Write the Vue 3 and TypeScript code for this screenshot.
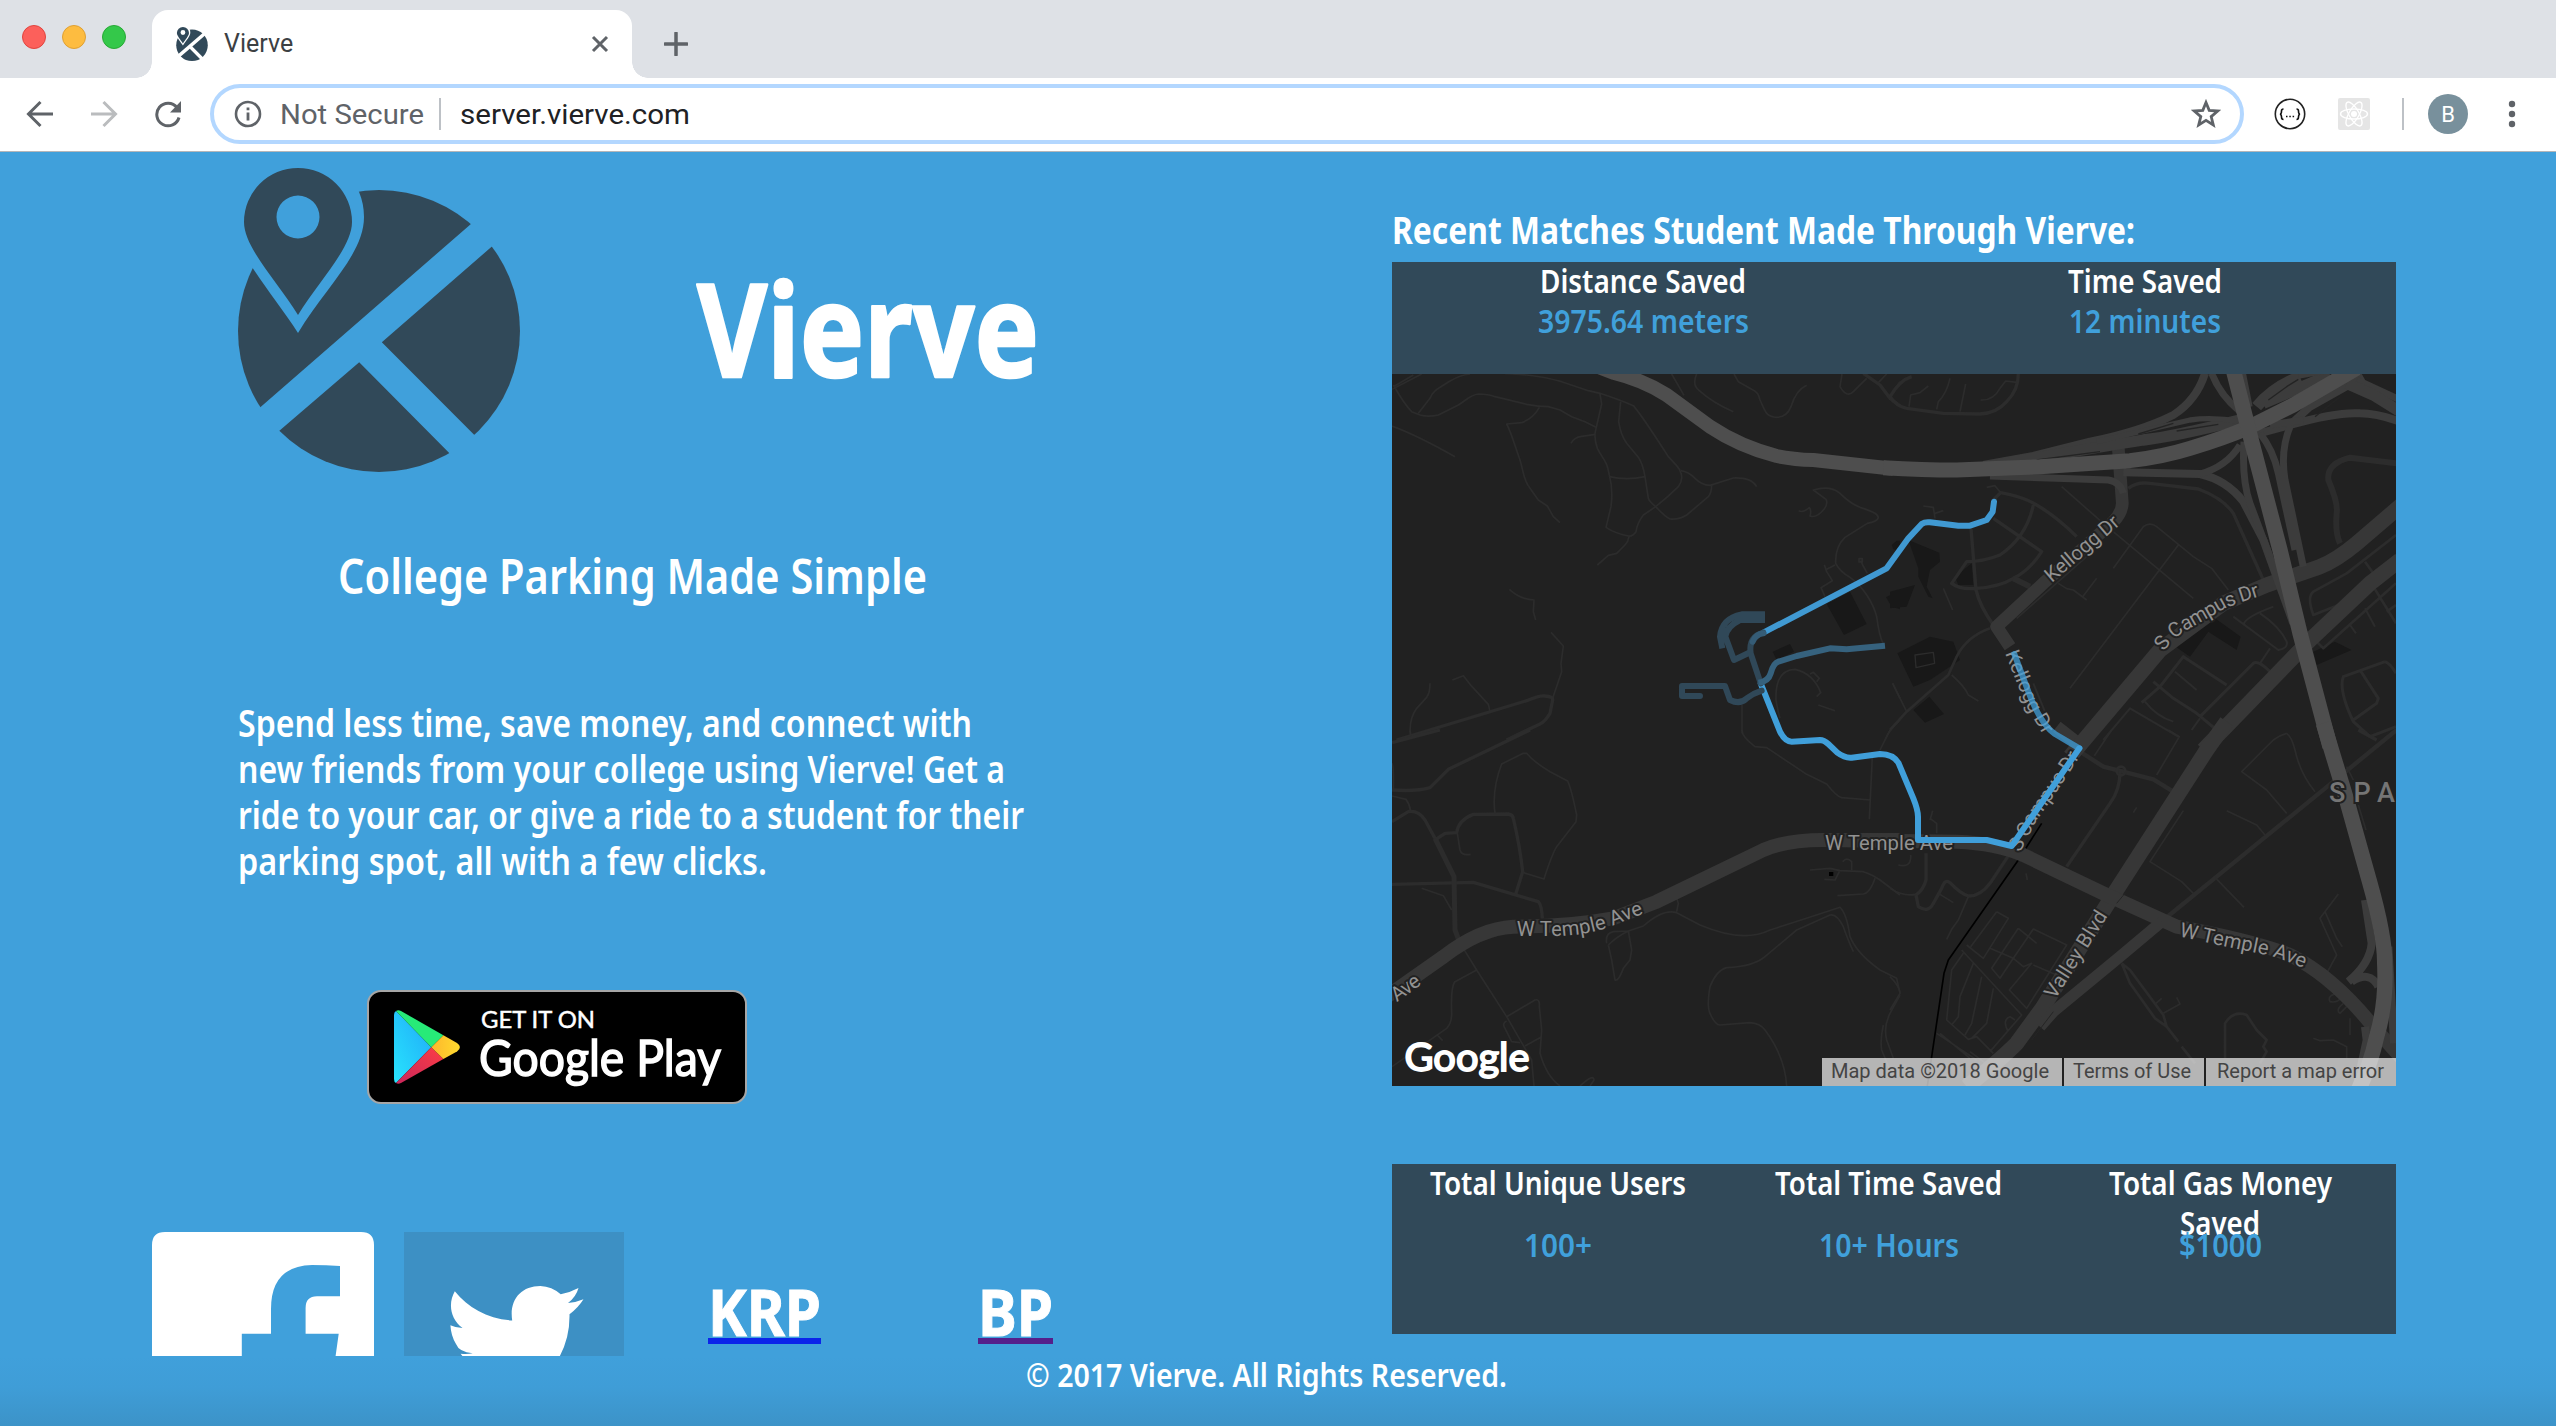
<script setup lang="ts">
import { defineComponent, h } from 'vue'

/* One line of text set to an exact measure. Baseline sits at 0.8 of the size. */
const Fit = defineComponent({
  props: { text: { type: String, required: true }, w: { type: Number, required: true }, size: { type: Number, required: true } },
  setup(props) {
    return () =>
      h('svg', { width: props.w, height: props.size, style: { display: 'block', overflow: 'visible', flex: 'none' } }, [
        h('text', {
          x: 0, y: props.size * 0.8 + 1, 'font-size': props.size, fill: 'currentColor',
          textLength: props.w, lengthAdjust: 'spacingAndGlyphs',
        }, props.text),
      ])
  },
})

interface Road { w: number; c: string; d: string }
interface Quadrant { id: string; at: string; blocks: string; minor: Road[]; major: Road[]; top: Road[] }

const LOCAL = '#2c2c2c'
const ART = '#373737'
const RAMP = '#3c3c3c'
const HWY = '#4e4e4e'

const quads: Quadrant[] = [
  {
    id: 'nw', at: 'translate(1380 370) scale(.333333)',
    blocks: 'M1340 702L1410 665L1460 762L1392 795ZM1178 845L1230 822L1242 845L1190 870ZM1518 682L1560 660V718L1535 710ZM1535 525L1550 512H1560V545L1540 538Z',
    minor: [
      { w: 5, c: LOCAL, d: 'M40 50L100 15M36 58L125 12M40 45C60 80 80 110 95 125L120 135Q145 142 175 135L235 105C260 90 270 75 295 72Q325 72 345 80L440 103Q475 110 505 110L540 120L575 140L615 155L648 172M115 130L150 85C160 60 175 55 210 33Q240 15 270 12' },
      { w: 5, c: LOCAL, d: 'M375 10L440 15Q500 22 545 35L625 62L660 70Q720 90 760 107C780 130 820 190 865 260L890 287Q900 298 903 310Q910 330 895 350C870 375 850 392 827 410L790 435C775 455 770 470 768 485Q758 500 745 498Q705 490 678 472L693 410Q700 360 688 315C680 270 670 270 652 235Q642 205 646 185L665 102L660 72' },
      { w: 5, c: LOCAL, d: 'M478 112Q460 145 425 158L380 162C395 190 405 230 420 270C432 310 430 330 450 355L475 390L502 408L520 440L540 458M573 220Q582 202 605 199L646 193M722 95L716 155Q722 195 740 220L775 262Q788 280 795 320L805 385Q808 395 827 410Q855 440 870 447Q895 450 920 435L985 380Q995 368 995 345M688 320Q740 332 795 320' },
      { w: 5, c: LOCAL, d: 'M903 302Q925 305 945 325Q965 345 990 346L1060 324Q1115 322 1130 350M747 500Q745 515 735 525L710 550L685 556L652 585M36 168Q110 195 225 260M875 12L912 76M950 12Q935 45 958 62Q1000 100 1060 125M1062 12L1075 35L1115 58Q1135 65 1140 90C1155 120 1155 140 1190 142Q1220 142 1233 110C1245 70 1260 55 1280 46M1386 12L1380 50Q1400 85 1420 65L1460 25M1495 38L1520 12M1530 80L1560 35' },
      { w: 5, c: LOCAL, d: 'M1256 422Q1268 430 1288 413Q1295 420 1290 438Q1310 445 1332 418Q1345 400 1338 388L1300 360Q1350 345 1380 370Q1410 400 1440 412Q1500 430 1494 445Q1490 455 1462 460L1395 502Q1365 530 1367 580Q1380 605 1410 622C1450 650 1480 700 1490 740Q1498 800 1510 822M1333 584L1340 605L1357 632L1323 653L1335 680M1340 598L1365 585M1442 572L1448 585L1462 610M1437 566h10v10h-10z' },
      { w: 5, c: LOCAL, d: 'M388 658Q420 688 462 690L460 725L467 750M513 787L550 828L543 880L545 905L518 985M150 940Q150 970 140 982L110 1015Q85 1050 92 1100M217 930L250 917L270 943L325 1003L330 1025M1200 1045Q1195 1030 1188 990Q1185 900 1245 898Q1300 910 1322 968L1310 980M1290 912L1300 907L1318 925L1310 935M1315 1005L1365 1022M1086 1005V1090M1515 1110Q1530 1075 1560 1050M1538 940L1560 985' },
      { w: 10, c: LOCAL, d: 'M50 1110L440 992Q480 975 495 978Q520 980 518 990L510 1030Q495 1055 480 1062L380 1110M1450 10L1500 45L1530 85L1560 108' },
    ],
    major: [],
    top: [{ w: 42, c: HWY, d: 'M640 -15L700 8Q790 30 860 75L990 170Q1080 230 1190 258Q1240 268 1300 270L1540 296' }],
  },
  {
    id: 'ne', at: 'translate(1890 370) scale(.333333)',
    blocks: 'M55 510L148 548L150 575L120 600L110 650L128 685L115 680L85 620L85 595ZM0 665L75 645L50 710L0 715ZM22 850L120 800L190 815L210 870L120 930L70 950ZM70 1020L118 980L162 1032L105 1058ZM850 825L975 745L1052 800L1040 840L955 785L900 860ZM1270 845L1335 815L1385 840L1280 885ZM195 620L245 580L250 645L205 645Z',
    minor: [
      { w: 4, c: LOCAL, d: 'M75 855L130 847L134 880L78 893Z' },
      { w: 10, c: LOCAL, d: 'M65 20Q30 30 0 80Q20 110 50 115L160 130L270 132Q320 130 350 95Q385 60 385 12M310 390L332 368Q400 380 440 405Q500 440 560 500M430 405Q410 500 330 555Q280 575 230 575L185 640Q210 660 260 655Q330 650 370 625Q420 600 455 545L310 445M243 475L258 660Q270 710 310 765M715 355Q740 335 780 340L925 357Q1000 385 1030 430L1120 630' },
      { w: 5, c: LOCAL, d: 'M57 110L62 75L90 68L115 48M140 118L145 95Q170 70 180 25M210 125L227 42M272 90Q310 92 330 55L347 33L380 37M290 352L315 347L332 368M100 408L130 412L135 445M135 430L160 422M160 655L188 720M515 350L640 460L910 685M670 595L760 470Q780 455 800 470L910 560L965 595L1015 660M865 525L540 955M380 745L590 560M505 640L530 656L550 660L590 690M578 680L620 625M185 915Q225 950 235 975L265 993M8 940L50 1025' },
      { w: 8, c: LOCAL, d: 'M300 775Q230 800 200 860L175 915L50 1025L0 1080M1518 495L1370 610L1270 665Q1250 680 1270 735L1370 695M1425 575L1450 610M1518 640L1300 835L1270 805M1450 650L1518 760M1490 725L1518 705' },
      { w: 18, c: LOCAL, d: 'M1520 280L1380 263Q1310 280 1315 330Q1345 400 1340 430Q1335 490 1350 520M370 625L420 650' },
      { w: 9, c: LOCAL, d: 'M1485 875Q1500 880 1518 910M1485 875L1360 920Q1345 960 1390 1055L1440 1100L1518 1070M1410 900L1465 985L1460 1000L1390 1050M755 998L810 950L880 860L1010 945M790 935L850 985L920 1030L980 1080M930 1040L1090 880Q1105 870 1140 905' },
      { w: 6, c: LOCAL, d: 'M1425 715L1455 770M1380 765L1398 790M905 1080L930 1045M855 905L920 960M765 995Q800 1040 850 1055M640 1110L720 1015L865 1100M1030 740L1165 840Q1195 835 1190 815Q1170 770 1110 730M1062 760Q1070 740 1150 710M1140 835L1110 880M430 940L475 1050' },
    ],
    major: [
      { w: 38, c: ART, d: 'M685 235L697 400Q695 430 670 455L460 640L320 770L360 830M500 1070L570 1125' },
      { w: 46, c: ART, d: 'M540 1160L810 840L1000 700L1130 645L1290 590Q1340 570 1400 520L1540 400M940 1140L1260 810L1440 640L1530 570' },
      { w: 24, c: RAMP, d: 'M945 10Q920 90 850 135Q750 185 600 215L430 258L280 285M700 307L930 312Q1010 330 1060 395L1120 510L1210 760M1090 195L1200 165Q1340 125 1410 130Q1460 130 1530 155M1200 165L1260 110L1420 20' },
      { w: 21, c: RAMP, d: 'M965 10Q990 75 1050 125M300 318L500 325L655 330Q690 335 700 370M930 312Q1010 290 1050 225M1062 215Q1055 330 1080 400L1140 560M1202 165Q1170 240 1185 330L1240 590M1140 165L1240 150M1400 30L1530 90M1110 190Q1150 240 1165 310L1215 540' },
      { w: 34, c: RAMP, d: 'M300 288Q600 235 760 210Q850 200 1050 150M1100 110Q1150 50 1230 20M1120 100L1320 15M1370 40L1450 75L1530 125' },
      { w: 16, c: RAMP, d: 'M620 215L900 150Q970 140 1050 155M1225 18L1300 5M1060 10L1080 110' },
      { w: 4, c: '#242424', d: 'M440 270L630 245M745 192L850 160M860 183L985 163M1135 90L1190 50L1225 28M1275 140L1350 80' },
    ],
    top: [
      { w: 45, c: HWY, d: 'M-20 293Q100 300 200 300L450 290L720 272Q820 260 900 235Q1000 205 1070 175L1210 105L1400 -5' },
      { w: 46, c: HWY, d: 'M1030 0L1085 215L1170 540L1230 790L1320 1130' },
    ],
  },
  {
    id: 'sw', at: 'translate(1380 730) scale(.333333)',
    blocks: '',
    minor: [
      { w: 10, c: LOCAL, d: 'M36 38L180 0M450 0L205 118L150 173Q110 185 36 180M36 275L85 245Q115 240 135 270L165 325M36 463L280 457L475 515Q485 525 487 565M165 330L195 310L230 308Q235 270 280 253L385 252Q398 254 400 265Q420 350 428 425L408 490' },
      { w: 15, c: LOCAL, d: 'M165 325L222 440L225 600L240 640' },
      { w: 5, c: LOCAL, d: 'M36 100Q42 110 40 180M90 0L93 18M345 250Q335 180 365 102L430 70L440 70Q460 95 510 125L563 153Q575 180 590 255L588 275L530 350Q515 375 492 447L430 428M232 310L240 360Q245 378 272 373M36 198L78 208Q90 225 92 245M125 475L190 497L215 540M250 655L290 720L380 860L455 990L462 1068M290 720L225 755Q212 770 215 850Q215 880 200 895L36 1010M172 915L188 932' },
      { w: 5, c: LOCAL, d: 'M380 860L465 810Q480 805 478 830L485 900L480 970Q500 1040 540 1068M485 920L435 948M380 873Q365 880 375 895L395 935L420 938M600 1068Q640 1030 642 1050L630 1068M680 640Q675 610 700 605L745 603L790 588Q850 535 890 548L960 585Q1090 640 1170 600Q1250 575 1380 532Q1400 550 1410 620Q1430 670 1500 720L1550 745L1560 790M685 645Q710 620 745 603L755 660L750 690L730 715Q715 755 705 750L695 690L685 645M890 545L895 520L890 505' },
      { w: 5, c: LOCAL, d: 'M1420 665Q1400 620 1390 590Q1370 550 1350 555L1250 600L1155 680Q1120 710 1040 713Q1010 720 990 770Q980 830 990 850Q1005 885 1020 885L1110 878Q1140 880 1155 900Q1215 980 1220 1068M1560 795L1530 850Q1510 890 1520 930L1540 985M1510 885Q1500 930 1505 960L1530 1020M1290 420L1350 415L1380 422L1450 425Q1480 435 1500 450L1560 495M1333 448L1365 450L1378 425M1388 395Q1400 380 1415 395V420M1485 445Q1470 490 1450 492L1372 497' },
      { w: 5, c: LOCAL, d: 'M1086 0Q1085 20 1125 50L1160 53L1280 133L1340 162Q1370 200 1385 203L1472 210M1477 80L1468 268M1500 60L1530 0' },
      { w: 12, c: '#000', d: 'M1347 432h13' },
    ],
    major: [{ w: 42, c: ART, d: 'M20 800L190 680Q300 595 400 590Q560 590 700 565L830 515L1150 360Q1220 330 1330 330L1560 330' }],
    top: [],
  },
  {
    id: 'se', at: 'translate(1890 730) scale(.333333)',
    blocks: '',
    minor: [
      { w: 13, c: LOCAL, d: 'M570 65L640 110L790 148L850 185M820 570L980 440L1520 0' },
      { w: 10, c: LOCAL, d: 'M690 125Q690 180 660 220L530 410M360 370L300 460Q270 500 235 498Q210 490 180 458Q165 445 155 475L130 520Q115 550 85 530L78 495M108 370V450Q100 480 78 495M1405 0L1460 30' },
      { w: 5, c: LOCAL, d: 'M78 493Q40 500 0 475M25 405Q65 415 62 375M120 270L128 242M120 265L140 280V310M613 77L665 0M835 0L868 20L800 135M880 242L780 395L875 455L910 490M1010 242L1100 285L1125 315M1190 10Q1170 15 1150 30L1055 125L1130 180L1190 250M1190 10Q1205 20 1215 60Q1230 130 1275 185M975 442L1062 532M740 232L730 248M408 430L412 450M145 490L190 518M235 500L205 570L185 598L170 628' },
      { w: 5, c: LOCAL, d: 'M320 545L355 565L280 685L230 645M320 545L242 650M215 660L395 855L300 965M220 670L185 720L170 870L235 928L260 920L310 970M385 595L305 715L330 745L370 685L400 710L425 700L358 780L410 835L530 645L430 597L370 685M385 595L440 640M300 655L370 685M430 705L500 735M250 700L210 800L205 860L185 885M275 740L245 880L225 915M310 775L290 880L245 925M240 965L300 1010M355 905Q335 870 360 860L375 870' },
      { w: 8, c: LOCAL, d: 'M695 700L720 760L795 865L830 890M695 700L720 720L820 855L830 890L865 935M875 950L915 1000M1005 985V880Q1030 840 1070 855L1100 900L1130 930L1120 950L1130 965L1110 1000' },
      { w: 5, c: LOCAL, d: 'M798 820L815 805M820 850L870 822L860 802M1345 492L1290 565L1340 675L1310 730M1305 545L1340 625L1357 650M1270 925L1290 932L1330 930L1370 950V985M140 910L260 990M150 910L240 985M0 740Q30 770 30 790L0 840M1380 865V915M1370 110L1390 150M1405 225L1428 300M1345 790Q1310 795 1320 815Q1345 820 1355 800M1360 820Q1335 840 1350 850L1370 830' },
      { w: 8, c: LOCAL, d: 'M680 123a13 13 0 1 0 26 0a13 13 0 1 0 -26 0' },
      { w: 5, c: '#000', d: 'M455 280L385 390L175 690L162 730L112 1068' },
    ],
    major: [
      { w: 46, c: ART, d: 'M1010 -25L950 60L660 510L460 830L380 940Q330 990 230 1070' },
      { w: 42, c: ART, d: 'M-200 330L200 335Q320 340 400 375L640 490L860 590Q1080 630 1200 675Q1330 740 1450 890L1540 990' },
      { w: 34, c: ART, d: 'M450 890L490 845L690 680L815 575' },
      { w: 3, c: '#252525', d: 'M425 930L490 845M680 520L705 490' },
      { w: 24, c: RAMP, d: 'M1425 510L1445 640Q1440 700 1375 755M1385 755Q1440 720 1465 770M1425 890L1430 930L1400 1070M1495 650L1512 940' },
    ],
    top: [{ w: 46, c: HWY, d: 'M1300 -20L1370 210L1440 460Q1485 620 1484 700Q1490 820 1460 920Q1440 1010 1405 1080' }],
  },
]

interface StreetLabel { id: string; q: number; d: string; text: string; len: number }
const labels: StreetLabel[] = [
  { id: 'l1', q: 1, d: 'M485 639L800 371', text: 'Kellogg Dr', len: 272 },
  { id: 'l2', q: 1, d: 'M822 845Q850 800 900 775L1000 718Q1060 690 1200 655', text: 'S Campus Dr', len: 338 },
  { id: 'l3', q: 1, d: 'M345 850Q385 950 410 1010L480 1130', text: 'Kellogg Dr', len: 272 },
  { id: 'l4', q: 2, d: 'M410 618H510Q600 620 680 594L900 508', text: 'W Temple Ave', len: 392 },
  { id: 'l5', q: 2, d: 'M1335 359H1900', text: 'W Temple Ave', len: 384 },
  { id: 'l6', q: 2, d: 'M50 817L180 723', text: 'Ave', len: 94 },
  { id: 'l7', q: 3, d: 'M390 368L440 270Q500 190 640 -30', text: 'S Campus Dr', len: 340 },
  { id: 'l8', q: 3, d: 'M495 810L718 455', text: 'Valley Blvd', len: 298 },
  { id: 'l9', q: 3, d: 'M866 619L960 640L1130 675Q1180 685 1350 762', text: 'W Temple Ave', len: 388 },
]

const pitch = [
  { text: 'Spend less time, save money, and connect with', w: 734 },
  { text: 'new friends from your college using Vierve! Get a', w: 767 },
  { text: 'ride to your car, or give a ride to a student for their', w: 786 },
  { text: 'parking spot, all with a few clicks.', w: 529 },
]

const match = [
  { label: 'Distance Saved', lw: 206, value: '3975.64 meters', vw: 211 },
  { label: 'Time Saved', lw: 154, value: '12 minutes', vw: 152 },
]

const totals = [
  { lines: [{ text: 'Total Unique Users', w: 256 }], value: '100+', vw: 68 },
  { lines: [{ text: 'Total Time Saved', w: 227 }], value: '10+ Hours', vw: 140 },
  { lines: [{ text: 'Total Gas Money', w: 223 }, { text: 'Saved', w: 80 }], value: '$1000', vw: 83 },
]
</script>

<template>
  <div class="window">
    <svg width="0" height="0" class="defs">
      <symbol id="logo" viewBox="238 168 282 304">
        <mask id="cut" maskUnits="userSpaceOnUse" x="230" y="160" width="300" height="320">
          <circle cx="379" cy="331" r="141" fill="#fff" />
          <path d="M500.600 198.200L521.500 220.700L381.800 342.300L504.300 465L479.200 483.200L359.200 362.300L249.600 456.300L230.600 433Z" fill="#000" />
          <path d="M298 333C275 296 232 250 232 217A66 66 0 0 1 364 217C364 254 325 288 298 333Z" fill="#000" />
        </mask>
        <rect x="230" y="160" width="300" height="320" fill="#314959" mask="url(#cut)" />
        <path fill="#314959" fill-rule="evenodd" d="M298 315C278 282 244 248 244 222A54 54 0 0 1 352 222C352 248 318 282 298 315ZM319.500 217a21.500 21.500 0 1 0 -43 0a21.500 21.500 0 1 0 43 0Z" />
      </symbol>
    </svg>

    <header class="tabs">
      <div class="lights"><i class="red" /><i class="amber" /><i class="green" /></div>
      <div class="tab">
        <svg class="fav" width="32" height="34"><use href="#logo" /></svg>
        <span class="tabname">Vierve</span>
        <svg class="close" width="18" height="18" viewBox="0 0 18 18"><path d="M2 2L16 16M16 2L2 16" stroke="#5f6368" stroke-width="3" /></svg>
      </div>
      <svg class="plus" width="24" height="24" viewBox="0 0 24 24"><path d="M12 1V23M1 12H23" stroke="#5f6368" stroke-width="3.500" stroke-linecap="round" /></svg>
    </header>

    <nav class="toolbar">
      <svg class="nav" width="28" height="28" viewBox="0 0 28 28" fill="none" stroke="#5f6368" stroke-width="3"><path d="M27 14H3M14.500 2L2.500 14L14.500 26" /></svg>
      <svg class="nav" width="28" height="28" viewBox="0 0 28 28" fill="none" stroke="#babcbe" stroke-width="3"><path d="M1 14H25M13.500 2L25.500 14L13.500 26" /></svg>
      <svg class="nav" width="28" height="28" viewBox="0 0 28 28"><path d="M23 7.500A11.300 11.300 0 1 0 25 17.500" fill="none" stroke="#5f6368" stroke-width="3" /><path d="M27 1V12.500H16Z" fill="#5f6368" /></svg>
      <div class="omnibox">
        <svg class="info" width="28" height="28" viewBox="0 0 28 28"><circle cx="14" cy="14" r="12" fill="none" stroke="#5f6368" stroke-width="2.600" /><path d="M14 12.500V20.500M14 7.500V10.300" stroke="#5f6368" stroke-width="2.800" /></svg>
        <Fit class="plain grey" text="Not Secure" :w="144" :size="28" />
        <i class="bar" />
        <Fit class="plain ink" text="server.vierve.com" :w="230" :size="28" />
        <svg class="star" width="30" height="30" viewBox="0 0 30 30"><path d="M15 3.500L18.200 11.400L26.800 12L20.200 17.600L22.300 26L15 21.400L7.700 26L9.800 17.600L3.200 12L11.800 11.400Z" fill="none" stroke="#5f6368" stroke-width="2.800" /></svg>
      </div>
      <svg class="ext1" width="32" height="32" viewBox="0 0 32 32"><circle cx="16" cy="16" r="14.700" fill="#fff" stroke="#222" stroke-width="1.600" /><g fill="none" stroke="#111" stroke-width="1.600"><path d="M9.500 11Q7.500 11 7.500 13Q7.500 16 6 16.200Q7.500 16.500 7.500 19Q7.500 21.500 9.500 21.500M22.500 11Q24.500 11 24.500 13Q24.500 16 26 16.200Q24.500 16.500 24.500 19Q24.500 21.500 22.500 21.500M12 18.500h1.500M15.300 18.500h1.500M18.600 18.500h1.500" /></g></svg>
      <svg class="ext2" width="32" height="32" viewBox="0 0 32 32"><rect width="32" height="32" rx="2" fill="#e5e5e5" /><g fill="none" stroke="#fff" stroke-width="1.400"><ellipse cx="16" cy="16" rx="13.500" ry="5" /><ellipse cx="16" cy="16" rx="13.500" ry="5" transform="rotate(60 16 16)" /><ellipse cx="16" cy="16" rx="13.500" ry="5" transform="rotate(120 16 16)" /></g><circle cx="16" cy="16" r="3" fill="#fff" /></svg>
      <i class="bar split" />
      <span class="avatar">B</span>
      <svg class="dots" width="8" height="28" viewBox="0 0 8 28" fill="#5f6368"><circle cx="4" cy="4" r="3.200" /><circle cx="4" cy="14" r="3.200" /><circle cx="4" cy="24" r="3.200" /></svg>
    </nav>

    <main class="page">
      <section class="left">
        <div class="hero">
          <svg width="282" height="304"><use href="#logo" /></svg>
          <Fit class="brand" text="Vierve" :w="342" :size="130" />
        </div>
        <Fit class="tagline" text="College Parking Made Simple" :w="589" :size="49" />
        <div class="pitch">
          <Fit v-for="l in pitch" :key="l.text" :text="l.text" :w="l.w" :size="38" />
        </div>
        <svg class="badge" width="380" height="114" viewBox="367 990 380 114">
          <defs>
            <linearGradient id="cy" x1="1" y1="0" x2="0" y2="1"><stop offset="0" stop-color="#20a8f8" /><stop offset="1" stop-color="#28e4fd" /></linearGradient>
            <linearGradient id="rd" x1="1" y1="0" x2="0" y2="1"><stop offset="0" stop-color="#fd3d45" /><stop offset="1" stop-color="#c9265b" /></linearGradient>
            <linearGradient id="ye" x1="0" x2="1"><stop offset="0" stop-color="#fdb72c" /><stop offset="1" stop-color="#ffda2e" /></linearGradient>
          </defs>
          <rect x="368" y="991" width="378" height="112" rx="13" fill="#000" stroke="#a6a6a6" stroke-width="2" />
          <path d="M396 1011L431.300 1047.300L396 1083Q394 1082 394 1079V1015Q394 1012 396 1011Z" fill="url(#cy)" />
          <path d="M396 1011Q398 1009.500 401 1011L443.400 1035.300L431.300 1047.300Z" fill="#27ea78" />
          <path d="M396 1083Q398 1084.500 401 1083L443.400 1059L431.300 1047.300Z" fill="url(#rd)" />
          <path d="M443.400 1035.300L457 1043Q463 1047.300 457 1051.500L443.400 1059L431.300 1047.300Z" fill="url(#ye)" />
          <g fill="#fff" stroke="#fff" font-family="Lato, sans-serif" font-weight="400">
            <text x="481" y="1027.700" font-size="24" stroke-width=".5" textLength="114" lengthAdjust="spacingAndGlyphs">GET IT ON</text>
            <text x="479" y="1076" font-size="51" stroke-width="1.500" textLength="242" lengthAdjust="spacingAndGlyphs">Google Play</text>
          </g>
        </svg>
        <div class="social">
          <svg width="222" height="124" viewBox="152 1232 222 124"><path fill="#fff" d="M152 1356V1245Q152 1232 165 1232H361Q374 1232 374 1245V1356H335.600L338.700 1333.700H305.600V1308Q305.600 1296.300 317 1296.300H340V1266Q326 1265 312 1265Q271 1266 271 1309V1333.700H241.800V1356Z" /></svg>
          <svg class="tw" width="220" height="124" viewBox="404 1232 220 124"><rect x="404" y="1232" width="220" height="124" fill="#3d90c4" /><path fill="#fff" d="M454.800 1291.300C468 1308 488 1319 512.200 1320.500C509 1300 521 1286 540.300 1286Q552 1286.500 560.700 1294.300Q570 1292.500 578.500 1288Q576 1297 568 1303Q576 1302.500 583.500 1299.300Q578 1308 569.500 1314.300Q570 1338 558.800 1358H464L460.600 1353.700Q467 1354.500 472.700 1353.300Q459 1352 456 1344Q451 1336 450.400 1325.300Q456 1328 462.500 1328C450 1319 448 1303 454.800 1291.300Z" /></svg>
          <a class="krp"><Fit text="KRP" :w="113" :size="65" /></a>
          <a class="bp"><Fit text="BP" :w="75" :size="65" /></a>
        </div>
      </section>

      <section class="right">
        <Fit class="heading" text="Recent Matches Student Made Through Vierve:" :w="743" :size="38" />
        <div class="panel match">
          <div v-for="m in match" :key="m.label" class="cell">
            <Fit :text="m.label" :w="m.lw" :size="32" />
            <Fit class="value" :text="m.value" :w="m.vw" :size="32" />
          </div>
        </div>
        <div class="map">
          <svg width="1004" height="712" viewBox="1392 374 1004 712">
            <rect x="1392" y="374" width="1004" height="712" fill="#212121" />
            <g v-for="q in quads" :key="'a' + q.id" :transform="q.at">
              <path :d="q.blocks" fill="#181818" />
              <path v-for="(r, i) in q.minor" :key="i" :d="r.d" fill="none" :stroke="r.c" :stroke-width="r.w" stroke-linejoin="round" />
            </g>
            <g v-for="q in quads" :key="'b' + q.id" :transform="q.at">
              <path v-for="(r, i) in q.major" :key="i" :d="r.d" fill="none" :stroke="r.c" :stroke-width="r.w" stroke-linejoin="round" />
            </g>
            <g v-for="q in quads" :key="'c' + q.id" :transform="q.at">
              <path v-for="(r, i) in q.top" :key="i" :d="r.d" fill="none" :stroke="r.c" :stroke-width="r.w" stroke-linejoin="round" />
            </g>
            <g v-for="l in labels" :key="l.id" :transform="quads[l.q].at" class="street">
              <path :id="l.id" :d="l.d" fill="none" stroke="none" />
              <text :textLength="l.len"><textPath :href="'#' + l.id" :textLength="l.len">{{ l.text }}</textPath></text>
            </g>
            <text class="city" x="2329" y="802" textLength="66">SPA</text>
            <g :transform="quads[0].at" fill="none" stroke-width="18" stroke-linejoin="round" stroke-linecap="round">
              <path stroke="#4099d2" d="M1150 788L1520 595L1585 505L1625 462Q1635 455 1650 457L1735 467H1770L1820 450L1838 425L1842 395" />
              <path stroke="#409fda" d="M1142 940L1200 1085Q1215 1115 1235 1115L1320 1110Q1332 1110 1345 1122L1372 1148Q1395 1165 1415 1163L1500 1152Q1540 1152 1556 1180L1600 1285Q1614 1320 1614 1340V1410H1820L1895 1428L2098 1135" />
              <path stroke="#409fda" stroke-opacity=".75" d="M1903 852L1945 965Q1980 1060 2025 1092L2098 1135" />
              <path stroke="#304858" stroke-linecap="butt" d="M1155 733H1085Q1025 745 1020 800L1027 835M1155 750H1080Q1040 770 1036 800L1062 870L1112 846" />
              <path stroke="#304858" d="M960 978H906V948H1035L1050 990Q1080 1005 1100 985Q1120 970 1145 962M1150 788Q1105 800 1112 850L1142 940" />
              <path stroke="#36627e" stroke-linecap="butt" d="M1135 938Q1165 935 1172 910Q1180 880 1195 875L1250 858L1350 835L1400 838L1515 827" />
              <path stroke="#355c76" d="M1150 790Q1128 792 1118 815" />
            </g>
            <text class="glogo" x="1404.500" y="1070.500" textLength="125" lengthAdjust="spacingAndGlyphs">Google</text>
          </svg>
          <div class="credits">
            <span class="c1"><Fit text="Map data ©2018 Google" :w="218" :size="20" /></span>
            <span class="c2"><Fit text="Terms of Use" :w="118" :size="20" /></span>
            <span class="c3"><Fit text="Report a map error" :w="167" :size="20" /></span>
          </div>
        </div>
        <div class="panel totals">
          <div v-for="t in totals" :key="t.value" class="cell">
            <div class="names"><Fit v-for="l in t.lines" :key="l.text" :text="l.text" :w="l.w" :size="32" /></div>
            <Fit class="value" :text="t.value" :w="t.vw" :size="32" />
          </div>
        </div>
      </section>
    </main>
    <footer class="foot"><Fit text="© 2017 Vierve. All Rights Reserved." :w="481" :size="32" /></footer>
  </div>
</template>

<style>
body { margin: 0; overflow: hidden; background: #40a0db; }
</style>

<style scoped>
* { box-sizing: border-box; }
.window { width: 2556px; height: 1426px; overflow: hidden; background: #40a0db; color: #fff; font-family: 'Noto Sans', 'Open Sans', sans-serif; font-weight: 600; }
.defs { position: absolute; }
.tabs { height: 78px; background: #dee1e6; display: flex; align-items: flex-start; }
.lights { display: flex; gap: 16px; padding: 25px 0 0 22px; width: 152px; }
.lights i { width: 24px; height: 24px; border-radius: 50%; border: 1px solid; }
.red { background: #fc605b; border-color: #e0443e !important; }
.amber { background: #fdbc40; border-color: #dfa033 !important; }
.green { background: #34c84a; border-color: #28a935 !important; }
.tab { position: relative; width: 480px; height: 68px; margin-top: 10px; background: #fff; border-radius: 16px 16px 0 0; display: flex; align-items: center; padding: 0 23px 0 24px; }
.tab::before, .tab::after { content: ''; position: absolute; bottom: 0; width: 16px; height: 16px; }
.tab::before { left: -16px; background: radial-gradient(circle at 0 0, #dee1e6 15.5px, #fff 16px); }
.tab::after { right: -16px; background: radial-gradient(circle at 100% 0, #dee1e6 15.5px, #fff 16px); }
.tabname { font: 400 25px Roboto, sans-serif; color: #3c4043; margin: -2px 0 0 16px; flex: 1; }
.plus { margin: 32px 0 0 32px; }
.toolbar { height: 74px; background: #fff; border-bottom: 1px solid #b4b6b9; display: flex; align-items: center; padding: 0 0 2px 26px; }
.nav { margin-right: 36px; flex: none; }
.nav:nth-child(3) { margin-right: 28px; }
.omnibox { width: 2034px; height: 60px; border: 4px solid #b3d7ff; border-radius: 30px; display: flex; align-items: center; padding: 0 19px 0 20px; flex: none; }
.plain { font: 400 28px Roboto, sans-serif; margin-top: 2px; }
.grey { color: #5f6368; margin-left: 18px; }
.ink { color: #202124; margin-left: 19px; }
.bar { width: 2px; height: 32px; background: #bdc1c6; margin-left: 15px; flex: none; }
.star { margin-left: auto; }
.ext1 { margin-left: 30px; flex: none; }
.ext2 { margin-left: 32px; flex: none; }
.split { margin-left: 32px; }
.avatar { width: 40px; height: 40px; margin-left: 24px; border-radius: 50%; background: #78909c; font: 400 22px/41px Roboto, sans-serif; text-align: center; flex: none; }
.dots { margin-left: 40px; }
.page { height: 1204px; display: flex; }
.left { width: 1392px; height: 1204px; overflow: hidden; display: flex; flex-direction: column; align-items: flex-start; }
.hero { display: flex; padding: 16px 0 0 238px; }
.brand { margin: 104px 0 0 177px; font-weight: 700; stroke: #fff; stroke-width: 2.5px; stroke-linejoin: round; }
.tagline { margin: 82px 0 0 338px; font-weight: 600; }
.pitch { margin: 103px 0 0 238px; display: flex; flex-direction: column; gap: 8px; font-weight: 600; }
.badge { margin: 108px 0 0 367px; flex: none; }
.social { margin: 128px 0 0 152px; height: 124px; display: flex; align-items: flex-start; flex: none; }
.tw { margin-left: 30px; }
.krp, .bp { display: block; height: 112px; padding-top: 51px; font-weight: 700; border-bottom: 6px solid #0b24ea; }
.krp svg, .bp svg { stroke: #fff; stroke-width: 1px; }
.krp { margin-left: 84px; }
.bp { margin-left: 157px; border-color: #551f8b; }
.right { width: 1004px; display: flex; flex-direction: column; }
.heading { margin: 60.6px 0 11.4px; font-weight: 700; }
.panel { background: #314959; display: flex; flex: none; padding-top: 4.4px; }
.match { height: 112px; }
.match .cell { width: 502px; gap: 8px; }
.cell { display: flex; flex-direction: column; align-items: center; font-weight: 600; }
.value { color: #40a0db; }
.map { position: relative; height: 712px; flex: none; }
.map > svg { display: block; }
.street text { font: 400 61px Roboto, sans-serif; fill: #929292; stroke: #212121; stroke-width: 12px; paint-order: stroke; stroke-linejoin: round; }
.city { font: 500 27px Roboto, sans-serif; fill: #757575; stroke: #212121; stroke-width: 4px; paint-order: stroke; }
.glogo { font: 400 39px Lato, sans-serif; fill: #fff; stroke: #fff; stroke-width: 1.8px; }
.credits { position: absolute; right: 0; bottom: 0; display: flex; height: 28px; font: 400 20px Roboto, sans-serif; color: #444; }
.credits span { background: rgba(245, 245, 245, .7); padding-top: 3.5px; }
.c1 { width: 240px; padding-left: 9px; margin-right: 2px; }
.c2 { width: 140px; padding-left: 9px; margin-right: 2px; }
.c3 { width: 190px; padding-left: 11px; }
.totals { height: 170px; margin-top: 78px; }
.totals .cell { width: 33%; }
.names { height: 62px; display: flex; flex-direction: column; align-items: center; gap: 8px; }
.foot { height: 70px; padding: 4.4px 0 0 1026px; font-weight: 600; background: linear-gradient(#40a0db, #3f9dd7 45%, #3c93c8); }
</style>
